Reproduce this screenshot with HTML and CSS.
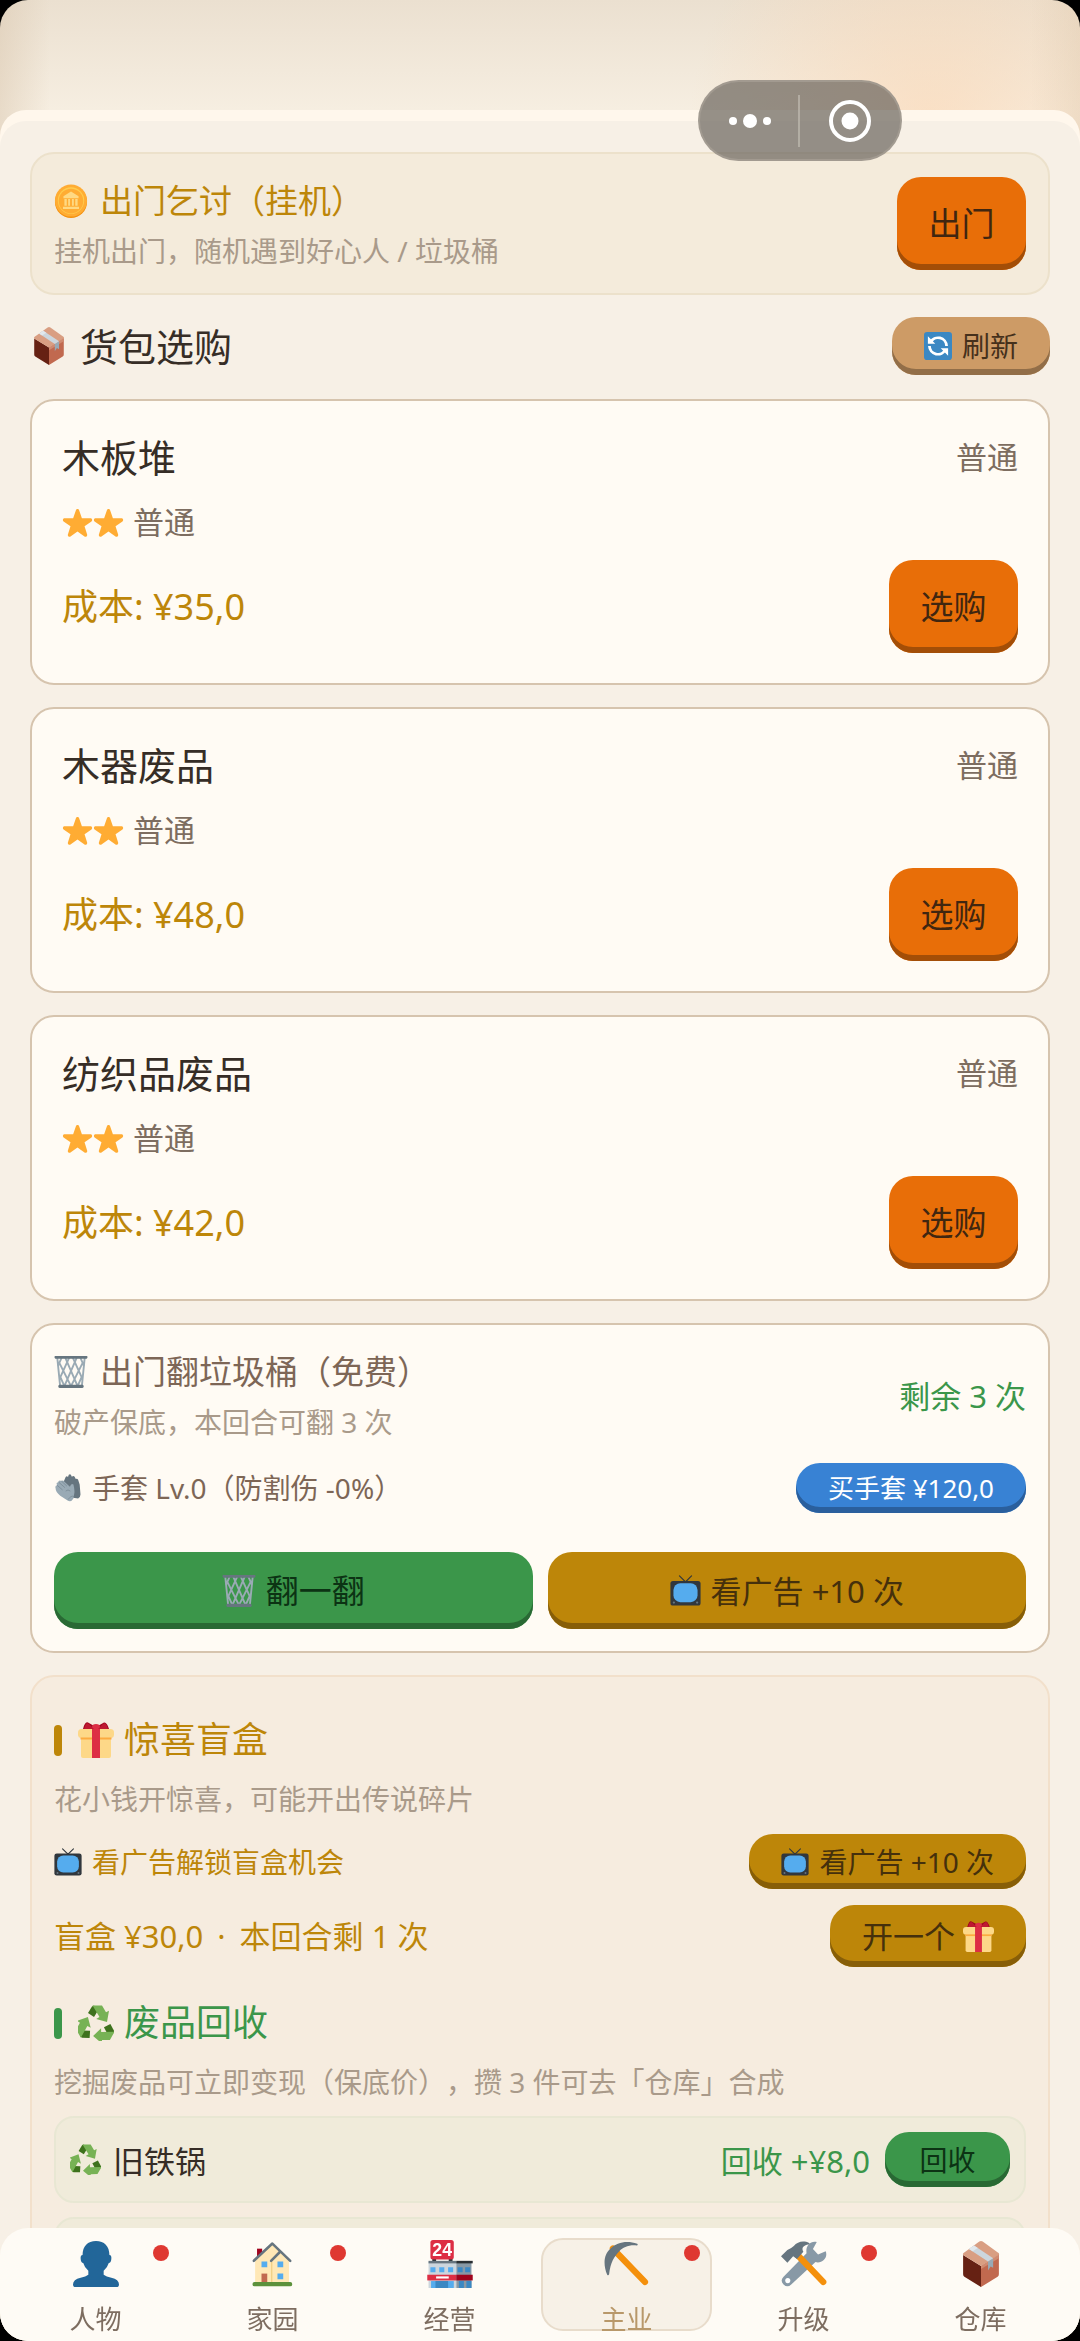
FILE: index.html
```
<!DOCTYPE html>
<html lang="zh-CN">
<head>
<meta charset="utf-8">
<meta name="viewport" content="width=device-width, initial-scale=1">
<title>主业</title>
<link rel="stylesheet" href="styles.css">
</head>
<body>
<svg class="sprite" aria-hidden="true">
  <symbol id="star" viewBox="0 0 36 36"><path fill="#ffac33" d="M27.287 34.627c-.404 0-.806-.124-1.152-.371L18 28.422l-8.135 5.834c-.343.247-.746.371-1.148.371-.4 0-.812-.127-1.155-.38-.685-.498-.971-1.379-.708-2.184l3.01-9.749-8.022-5.62c-.679-.499-.961-1.377-.705-2.184.261-.806 1.009-1.352 1.856-1.359l9.947-.015 3.219-9.489c.27-.8 1.022-1.34 1.867-1.34s1.596.54 1.864 1.34l3.219 9.489 9.947.015c.849.007 1.596.553 1.856 1.359.258.808-.022 1.685-.705 2.184l-8.022 5.62 3.01 9.749c.263.805-.023 1.686-.708 2.184-.343.253-.749.38-1.153.38z"/></symbol>
  <symbol id="coin" viewBox="0 0 36 36"><circle cx="18" cy="19" r="17" fill="#f4900c"/><circle cx="18" cy="17.500" r="17" fill="#ffac33"/><circle cx="18" cy="17.500" r="14" fill="#ffcc4d"/><circle cx="18" cy="18" r="13" fill="#ffac33"/><path fill="#ffd983" d="M18 8l8 5v2H10v-2zm-7 8h2.500v7H11zm4 0h2v7h-2zm4 0h2v7h-2zm3.500 0H25v7h-2.500zM9.500 24h17v2.500h-17z"/></symbol>
  <symbol id="box" viewBox="0 0 36 36"><path fill="#662113" d="M4 11l14 8.500V36L5 28q-1-.6-1-2z"/><path fill="#c1694f" d="M32 11l-14 8.500V36l13-8q1-.6 1-2z"/><path fill="#d99e82" d="M18 0q.7 0 1.300.4L32 9.500q.6 1-.3 1.700L18 19.500 4.300 11.200q-.9-.8-.2-1.700L16.700.4Q17.300 0 18 0z"/><path fill="#d08a70" d="M18 19.500l14-9v3L18 22z"/><path fill="#99aab5" d="M23.500 16l4-2.500V21l-2-1-2 3z"/><path fill="#ccd6dd" d="M12.500 3.500l15 10-4 2.600L8.500 6.200z"/><path fill="#e1e8ed" d="M12.500 3.500l3 2-4 2.600-3-1.900z"/></symbol>
  <symbol id="refresh" viewBox="0 0 36 36"><rect width="36" height="36" rx="4" fill="#3b88c3"/><path fill="none" stroke="#fff" stroke-width="3.600" d="M8.500 13.500A10.800 10.800 0 0 1 29 18M27.500 22.500A10.800 10.800 0 0 1 7 18"/><path fill="#fff" d="M5 5.500V15h9.500zM31 30.500V21h-9.500z"/></symbol>
  <symbol id="bin" viewBox="0 0 36 36"><g fill="none" stroke="#9aaab4" stroke-width="2"><path d="M3.500 3l3 30M32.500 3l-3 30M5 7l13 26M12 3l13 30M20 3l10 22M28 3l4 9M7 24l4 9M31 7L18 33M24 3L11 33M16 3L6 25M8 3l-4 9M29 24l-4 9"/></g><path fill="#66757f" d="M1.500 1h33q1 0 1 1.200t-1 1.800h-33q-1-.6-1-1.800T1.500 1zM6 31.500h24q1.500 0 1.500 1.700T30 35H6q-1.500 0-1.500-1.800T6 31.500z"/></symbol>
  <symbol id="glove" viewBox="0 0 36 36"><path fill="#66757f" d="M12 11l3-7q1.500-2 3 0l1-3q2-1.500 3 .5l1 2q2-2 3.500 0l1.500 3q2-1 3 1l2 6 1 12q.5 4-3 6L20 30z"/><path fill="#99aab5" d="M2 18q-1-3 2-3.500-2-3.500 1.500-4Q6 7.500 9.500 9q2-1.500 4 1l7 6.500q1.500-5.500 4.500-3 2 8 1 12l-1 6q-3 5-7 3L8 28q-6-5-6-10z"/><path fill="none" stroke="#748590" stroke-width=".9" d="M4 14.500l7 6M6 10.500l8 7M9.500 9l7 6.500M15 22q3-3 6 0M18 33q4-6 8-4"/></symbol>
  <symbol id="tv" viewBox="0 0 36 36"><path fill="none" stroke="#31373d" stroke-width="1.400" stroke-linecap="round" d="M11 1l7 7 7-7"/><rect x=".5" y="7" width="35" height="28.500" rx="3" fill="#31373d"/><rect x="4" y="9.500" width="28" height="22" rx="8" fill="#55acee"/><circle cx="4.500" cy="32" r="1.300" fill="#66757f"/><circle cx="31.500" cy="32" r="1.300" fill="#66757f"/></symbol>
  <symbol id="gift" viewBox="0 0 36 36"><path fill="#fdd888" d="M3 14h30v20q0 2-2 2H5q-2 0-2-2z"/><rect x="0" y="7" width="36" height="9" rx="3.500" fill="#fdd888"/><path fill="#fcab40" d="M2.500 15.500h31v2h-31z"/><path fill="#a0041e" d="M5 7q2-8 5-6.500L18 5l8-4.500Q29 0 31 7z"/><path fill="#dd2e44" d="M14 5q0-3 4-3t4 3v31h-8z"/><path fill="#be1931" d="M6 7q2-8 5-5l5 5zM30 7q-2-8-5-5l-5 5z"/></symbol>
  <symbol id="recycle" viewBox="0 0 36 36"><g id="seg"><path fill="#3e721d" d="M10 8l4-6.500 2-.9 4 5L16 12z"/><path fill="#77b255" d="M14.500.5H24l4 6.700L31 5.800 29 17 18.200 14l3.300-2z"/></g><use href="#seg" transform="rotate(120 18 20)"/><use href="#seg" transform="rotate(240 18 20)"/></symbol>
  <symbol id="person" viewBox="0 0 36 36"><path fill="#269" d="M18 0c6.500 0 10.500 4 10.500 11q1.800.2 1.500 3-.3 3-2 3.200-1.200 4-4 6v3.300q2 1.500 6 2.200 6 1.300 6 5.300 0 2-2 2H2q-2 0-2-2 0-4 6-5.300 4-.7 6-2.200v-3.300q-2.800-2-4-6-1.700-.2-2-3.200-.3-2.800 1.500-3C7.500 4 11.500 0 18 0z"/></symbol>
  <symbol id="house" viewBox="0 0 36 36"><path fill="#a0041e" d="M5.500 6h4v9h-4z"/><path fill="#ffe8b6" d="M4 14L17.500 2 30.500 14v19H4z"/><path fill="#f5d68f" d="M17 16l6-6v-2l-6 6z"/><path fill="none" stroke="#f0cf83" d="M17 16v17"/><path fill="none" stroke="#66757f" stroke-width="2" stroke-linejoin="round" stroke-linecap="round" d="M3 15.500L17.500 2 31.500 15.500M16.500 15.500l6.500-6.500"/><path fill="#55acee" d="M9 16h4.500v4.500H9zm12.500 0H26v4.500h-4.500zm0 9.500H26V30h-4.500z"/><path fill="#c1694f" d="M9 25.500h4.500V33H9z"/><rect x="2" y="32" width="31" height="3.500" rx="1.500" fill="#5c913b"/></symbol>
  <symbol id="shop" viewBox="0 0 36 38"><path fill="#292f33" d="M4 14h3v4H4zm13 0h3v4h-3z"/><rect x="2.500" y="0" width="18.500" height="15.500" rx="2" fill="#dd2e44"/><text x="11.800" y="12.400" class="shop-sign" text-anchor="middle">24</text><path fill="#ccd6dd" d="M1 17h22v21H1z"/><path fill="#8899a6" d="M23 17h12v21H23z"/><path fill="#66757f" d="M1 16.500h22v2H1z"/><path fill="#292f33" d="M23 16.500h13v2H23z"/><path fill="#55acee" d="M2.500 21.500h4v4h-4zm7 0h4v4h-4zm7 0h4v4h-4z"/><path fill="#3b88c3" d="M24 21.500h4v4h-4zm6 0h4v4h-4z"/><path fill="#dd2e44" d="M0 27.500h23v4.500H0z"/><path fill="#a0041e" d="M23 27.500h13v4.500H23z"/><path fill="#fff" d="M7 28.800h10v1.700H7z"/><path fill="#55acee" d="M3 32.500h18V38H3z"/><path fill="#3b88c3" d="M6.500 32.500h10V38h-10zM25 32.500h4V38h-4zm6 0h4V38h-4z"/></symbol>
  <symbol id="pick" viewBox="0 0 36 36"><path stroke="#f4900c" stroke-width="5" stroke-linecap="round" d="M7 6l25 26"/><path fill="#66757f" d="M2.500 26.500C-1 18 0 10 5 6 10 1 18-.8 26 2.200q1 1-.5 1.300C19 3 15 5 12 8c-4 4-7 9-8 18q-.5 1.500-1.500.5z"/></symbol>
  <symbol id="tools" viewBox="0 0 36 36"><path fill="#8899a6" d="M28 .8l-3 5.400 4 4.300L35 8c2 5-3 10-8 8.500L8 34q-3 3-6 0t0-6L20 9.500C19 4 23-.5 28 .8z"/><circle cx="5.300" cy="31" r="2" fill="#fff"/><path stroke="#f4900c" stroke-width="5" stroke-linecap="round" d="M12 10l21 22"/><path fill="#66757f" d="M10 4c3-4 8-4.500 12-2.500q1 1-1 1.300c-4 1-5 3-3.500 5.700l-5 5.500-3-2-4.500 5L0 12l5-5q3-1 5-3z"/></symbol>
</svg>

<div class="app">
  <header class="topbar">
    <div class="capsule">
      <button class="capsule-btn" aria-label="更多"><svg width="46" height="46" viewBox="0 0 46 46" fill="#fff"><circle cx="6" cy="23" r="4"/><circle cx="23" cy="23" r="7"/><circle cx="40" cy="23" r="4"/></svg></button>
      <button class="capsule-btn" aria-label="关闭"><svg width="46" height="46" viewBox="0 0 46 46"><circle cx="23" cy="23" r="19" fill="none" stroke="#fff" stroke-width="4"/><circle cx="23" cy="23" r="8.500" fill="#fff"/></svg></button>
    </div>
  </header>

  <main class="sheet">
    <div class="content">
      <section class="card idle">
        <div class="stack">
          <h2 class="title gold"><svg class="ico i34"><use href="#coin"/></svg>出门乞讨（挂机）</h2>
          <p class="note">挂机出门，随机遇到好心人 / 垃圾桶</p>
        </div>
        <button class="btn big orange">出门</button>
      </section>

      <div class="section-row">
        <h1 class="section-title"><svg class="ico i38"><use href="#box"/></svg>货包选购</h1>
        <button class="btn pill tan"><svg class="ico i28"><use href="#refresh"/></svg>刷新</button>
      </div>

      <article class="card goods">
        <div class="row"><h3 class="name">木板堆</h3><span class="grade">普通</span></div>
        <p class="grade stars"><svg class="ico i31"><use href="#star"/></svg><svg class="ico i31"><use href="#star"/></svg><span>普通</span></p>
        <div class="row"><span class="cost">成本: ¥35,0</span><button class="btn big orange">选购</button></div>
      </article>
      <article class="card goods">
        <div class="row"><h3 class="name">木器废品</h3><span class="grade">普通</span></div>
        <p class="grade stars"><svg class="ico i31"><use href="#star"/></svg><svg class="ico i31"><use href="#star"/></svg><span>普通</span></p>
        <div class="row"><span class="cost">成本: ¥48,0</span><button class="btn big orange">选购</button></div>
      </article>
      <article class="card goods">
        <div class="row"><h3 class="name">纺织品废品</h3><span class="grade">普通</span></div>
        <p class="grade stars"><svg class="ico i31"><use href="#star"/></svg><svg class="ico i31"><use href="#star"/></svg><span>普通</span></p>
        <div class="row"><span class="cost">成本: ¥42,0</span><button class="btn big orange">选购</button></div>
      </article>

      <section class="card trash">
        <div class="row">
          <div class="stack">
            <h2 class="title"><svg class="ico i34"><use href="#bin"/></svg>出门翻垃圾桶（免费）</h2>
            <p class="note">破产保底，本回合可翻 3 次</p>
          </div>
          <span class="left">剩余 3 次</span>
        </div>
        <div class="row glove-row">
          <span class="label"><svg class="ico i28"><use href="#glove"/></svg>手套 Lv.0（防割伤 -0%）</span>
          <button class="btn pill blue">买手套 ¥120,0</button>
        </div>
        <div class="pair">
          <button class="btn wide green flip"><svg class="ico i34"><use href="#bin"/></svg>翻一翻</button>
          <button class="btn wide golden"><svg class="ico i31"><use href="#tv"/></svg>看广告 +10 次</button>
        </div>
      </section>

      <section class="card surprise">
        <h2 class="heading gold"><span class="bar"></span><svg class="ico i36"><use href="#gift"/></svg>惊喜盲盒</h2>
        <p class="note">花小钱开惊喜，可能开出传说碎片</p>
        <div class="row ad-row">
          <span class="label gold"><svg class="ico i28"><use href="#tv"/></svg>看广告解锁盲盒机会</span>
          <button class="btn pill golden"><svg class="ico i28"><use href="#tv"/></svg>看广告 +10 次</button>
        </div>
        <div class="row open-row">
          <span class="price gold"><span>盲盒 ¥30,0</span><span>·</span><span>本回合剩 1 次</span></span>
          <button class="btn pill tall golden">开一个<svg class="ico i31"><use href="#gift"/></svg></button>
        </div>
        <h2 class="heading green-text"><span class="bar"></span><svg class="ico i36"><use href="#recycle"/></svg>废品回收</h2>
        <p class="note">挖掘废品可立即变现（保底价），攒 3 件可去「仓库」合成</p>
        <ul class="items">
          <li class="item">
            <span class="item-name"><svg class="ico i31"><use href="#recycle"/></svg>旧铁锅</span>
            <span class="gain">回收 +¥8,0</span>
            <button class="btn pill green">回收</button>
          </li>
          <li class="item"></li>
        </ul>
      </section>
    </div>
  </main>

  <nav class="tabs">
    <a class="tab dot" href="#"><svg class="tab-ico"><use href="#person"/></svg>人物</a>
    <a class="tab dot" href="#"><svg class="tab-ico"><use href="#house"/></svg>家园</a>
    <a class="tab" href="#"><svg class="tab-ico"><use href="#shop"/></svg>经营</a>
    <a class="tab dot active" href="#" aria-current="page"><svg class="tab-ico"><use href="#pick"/></svg>主业</a>
    <a class="tab dot" href="#"><svg class="tab-ico"><use href="#tools"/></svg>升级</a>
    <a class="tab" href="#"><svg class="tab-ico"><use href="#box"/></svg>仓库</a>
  </nav>
</div>
</body>
</html>
```
FILE: styles.css
```
* { box-sizing: border-box; }

body {
  margin: 0;
  background: #000;
  color: #362d26;
  font-family: "Noto Sans", "Noto Sans CJK SC", sans-serif;
  font-size: 28px;
  text-spacing-trim: space-all;
}

h1, h2, h3, p, ul { margin: 0; padding: 0; font-weight: 400; list-style: none; }

.sprite { display: none; }

.shop-sign { fill: #fff; font: 700 14px "Liberation Sans", sans-serif; }

.app {
  position: relative;
  display: flex;
  flex-direction: column;
  height: 100vh;
  overflow: hidden;
  border-radius: 28px;
  background:
    linear-gradient(90deg, rgba(215, 195, 170, .45), transparent 50px),
    linear-gradient(270deg, rgba(225, 200, 170, .4), transparent 50px),
    radial-gradient(circle 240px at calc(100% - 150px) 120px, rgba(252, 214, 178, .6), transparent),
    linear-gradient(#ebe0d0, #f6eee1 110px);
}

.topbar { flex: none; height: 110px; }

.capsule {
  position: absolute;
  z-index: 2;
  top: 80px;
  right: 178px;
  display: flex;
  width: 204px;
  height: 81px;
  border: 2px solid rgba(165, 158, 148, .8);
  border-radius: 41px;
  background: rgba(105, 100, 93, .7);
}

.capsule-btn {
  flex: 1;
  display: grid;
  place-items: center;
  padding: 0;
  border: 0;
  background: linear-gradient(rgba(200, 195, 185, .6), rgba(200, 195, 185, .6)) right center / 0 52px no-repeat;
}

.capsule-btn:first-child { background-size: 2px 52px; }

.sheet {
  flex: 1;
  min-height: 0;
  padding-top: 11px;
  border-radius: 26px 26px 0 0;
  background: #fff7ec;
}

.content {
  display: flex;
  flex-direction: column;
  gap: 22px;
  height: 100%;
  padding: 31px 30px 0;
  overflow-y: auto;
  scrollbar-width: none;
  border-radius: 26px 26px 0 0;
  background: #f7f0e6;
}

.card {
  flex: none;
  border: 2px solid #d6c4ae;
  border-radius: 24px;
  background: #fffbf4;
}

.row { display: flex; align-items: center; justify-content: space-between; }

.ico { flex: none; margin-right: 12px; }
.i28 { width: 28px; height: 28px; margin-right: 10px; }
.i31 { width: 31px; height: 31px; }
.i34 { width: 34px; height: 36px; }
.i36 { width: 36px; height: 36px; }
.i38 { width: 38px; height: 38px; }

.gold { color: #bd8609; }
.green-text { color: #3b964a; }

/* buttons */
.btn {
  display: inline-flex;
  align-items: center;
  justify-content: center;
  border: 0;
  padding: 0 32px;
  border-radius: 24px;
  font-family: inherit;
  font-size: 31px;
  line-height: 40px;
}

.big { width: 129px; height: 93px; padding: 0; font-size: 33px; }
.wide { flex: 1; height: 77px; }
.wide .ico { margin-right: 10px; }
.flip { font-size: 33px; }
.pill { height: 55px; font-size: 28px; }
.tall { height: 62px; font-size: 31px; }
.tall .ico { margin: 0 0 0 8px; }

.orange { background: #e86e08; color: #402610; box-shadow: inset 0 -6px #a34e07; }
.tan { height: 58px; background: #cd9b66; color: #45301b; box-shadow: inset 0 -6px #926e48; }
.blue { height: 50px; background: #3882d4; color: #fff; font-size: 26px; box-shadow: inset 0 -6px #2a5f9d; }
.green { background: #3b964a; color: #0c3314; box-shadow: inset 0 -6px #296934; }
.golden { background: #bd8609; color: #45300c; box-shadow: inset 0 -6px #875e08; }

/* shared text */
.title { display: flex; align-items: center; font-size: 33px; line-height: 50px; }
.title:not(.gold) { color: #7d6656; }
.note { color: #a99a8a; font-size: 28px; line-height: 40px; }
.stack { display: grid; gap: 5px; }

.idle {
  display: flex;
  align-items: center;
  justify-content: space-between;
  padding: 22px;
  border-color: #ece1cb;
  background: #f4ebdb;
}

.section-row { display: flex; align-items: center; justify-content: space-between; margin-bottom: 2px; }
.section-title { display: flex; align-items: center; font-size: 38px; line-height: 50px; }

.goods { padding: 30px; }
.name { font-size: 38px; line-height: 52px; }
.grade { color: #7d6d60; font-size: 31px; line-height: 40px; }
.stars { display: flex; align-items: center; margin: 19px 0 18px; }
.stars .ico { margin: 0; }
.stars span { margin-left: 9px; }
.cost { color: #bd8609; font-size: 36px; line-height: 50px; }

.trash { padding: 22px; }
.left { color: #3b964a; font-size: 31px; }
.glove-row { margin: 21px 0 39px; }
.label { display: flex; align-items: center; font-size: 28px; line-height: 40px; }
.label:not(.gold) { color: #7d6656; }
.pair { display: flex; gap: 15px; }

.surprise { padding: 38px 22px 140px; border-color: #f2e0cb; background: #f6ecdf; }
.heading { display: flex; align-items: center; font-size: 36px; line-height: 50px; margin-bottom: 14px; }
.heading .ico { margin-right: 10px; }
.bar { width: 8px; height: 31px; margin-right: 16px; border-radius: 4px; background: currentColor; }
.ad-row { margin: 15px 0 16px; }
.open-row { margin-bottom: 31px; }
.price { display: flex; gap: 14px; font-size: 31px; line-height: 40px; }

.items { display: grid; gap: 14px; margin-top: 14px; }
.item {
  display: flex;
  align-items: center;
  gap: 15px;
  min-height: 87px;
  padding: 14px;
  border: 2px solid #e8e7d3;
  border-radius: 20px;
  background: #f0ebda;
  font-size: 31px;
}
.item .btn { min-width: 125px; }
.item-name { flex: 1; display: flex; align-items: center; }
.gain { color: #3b964a; }

/* bottom navigation */
.tabs {
  position: absolute;
  right: 0;
  bottom: 0;
  left: 0;
  display: flex;
  gap: 6px;
  height: 113px;
  padding: 10px 14px 10px 10px;
  border-radius: 28px;
  background: #fefbf5;
}

.tab {
  position: relative;
  flex: 1;
  display: flex;
  flex-direction: column;
  align-items: center;
  gap: 12px;
  border: 2px solid transparent;
  border-radius: 22px;
  color: #7d6d60;
  font-size: 26px;
  line-height: 38px;
  text-decoration: none;
}

.tab-ico { flex: none; width: 46px; height: 48px; }
.active { border-color: #e8dccb; background: #f7f1e7; color: #b8986a; }

.dot::after {
  content: "";
  position: absolute;
  top: 5px;
  right: 10px;
  width: 16px;
  height: 16px;
  border-radius: 50%;
  background: #df3831;
}
```
